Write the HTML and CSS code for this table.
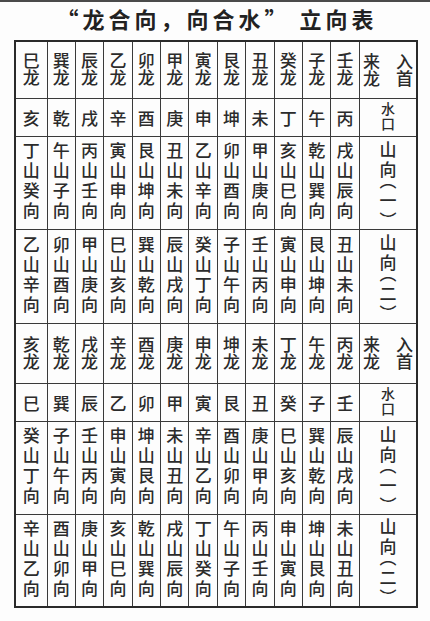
FILE: index.html
```html
<!DOCTYPE html>
<html lang="zh">
<head>
<meta charset="utf-8">
<title>龙合向，向合水 立向表</title>
<link rel="stylesheet" href="styles.css">
</head>
<body>
<div class="page">
  <h1 class="title">“龙合向，向合水” 立向表</h1>
  <table class="grid">
    <colgroup>
      <col class="c-first">
      <col class="c"><col class="c"><col class="c"><col class="c"><col class="c"><col class="c">
      <col class="c"><col class="c"><col class="c"><col class="c"><col class="c">
      <col class="c-last">
    </colgroup>
    <tr class="r-dragon">
      <td><span class="v">巳龙</span></td><td><span class="v">巽龙</span></td><td><span class="v">辰龙</span></td><td><span class="v">乙龙</span></td><td><span class="v">卯龙</span></td><td><span class="v">甲龙</span></td><td><span class="v">寅龙</span></td><td><span class="v">艮龙</span></td><td><span class="v">丑龙</span></td><td><span class="v">癸龙</span></td><td><span class="v">子龙</span></td><td><span class="v">壬龙</span></td>
      <td class="head"><div class="pair"><span class="v">入首</span><span class="v">来龙</span></div></td>
    </tr>
    <tr class="r-water">
      <td>亥</td><td>乾</td><td>戌</td><td>辛</td><td>酉</td><td>庚</td><td>申</td><td>坤</td><td>未</td><td>丁</td><td>午</td><td>丙</td>
      <td class="head"><span class="v small">水口</span></td>
    </tr>
    <tr class="r-long">
      <td><span class="v v4">丁山癸向</span></td><td><span class="v v4">午山子向</span></td><td><span class="v v4">丙山壬向</span></td><td><span class="v v4">寅山申向</span></td><td><span class="v v4">艮山坤向</span></td><td><span class="v v4">丑山未向</span></td><td><span class="v v4">乙山辛向</span></td><td><span class="v v4">卯山酉向</span></td><td><span class="v v4">甲山庚向</span></td><td><span class="v v4">亥山巳向</span></td><td><span class="v v4">乾山巽向</span></td><td><span class="v v4">戌山辰向</span></td>
      <td class="head"><span class="v v4 paren">山向（一）</span></td>
    </tr>
    <tr class="r-long2">
      <td><span class="v v4">乙山辛向</span></td><td><span class="v v4">卯山酉向</span></td><td><span class="v v4">甲山庚向</span></td><td><span class="v v4">巳山亥向</span></td><td><span class="v v4">巽山乾向</span></td><td><span class="v v4">辰山戌向</span></td><td><span class="v v4">癸山丁向</span></td><td><span class="v v4">子山午向</span></td><td><span class="v v4">壬山丙向</span></td><td><span class="v v4">寅山申向</span></td><td><span class="v v4">艮山坤向</span></td><td><span class="v v4">丑山未向</span></td>
      <td class="head"><span class="v v4 paren">山向（二）</span></td>
    </tr>
    <tr class="r-dragon2">
      <td><span class="v">亥龙</span></td><td><span class="v">乾龙</span></td><td><span class="v">戌龙</span></td><td><span class="v">辛龙</span></td><td><span class="v">酉龙</span></td><td><span class="v">庚龙</span></td><td><span class="v">申龙</span></td><td><span class="v">坤龙</span></td><td><span class="v">未龙</span></td><td><span class="v">丁龙</span></td><td><span class="v">午龙</span></td><td><span class="v">丙龙</span></td>
      <td class="head"><div class="pair"><span class="v">入首</span><span class="v">来龙</span></div></td>
    </tr>
    <tr class="r-water">
      <td>巳</td><td>巽</td><td>辰</td><td>乙</td><td>卯</td><td>甲</td><td>寅</td><td>艮</td><td>丑</td><td>癸</td><td>子</td><td>壬</td>
      <td class="head"><span class="v small">水口</span></td>
    </tr>
    <tr class="r-long">
      <td><span class="v v4">癸山丁向</span></td><td><span class="v v4">子山午向</span></td><td><span class="v v4">壬山丙向</span></td><td><span class="v v4">申山寅向</span></td><td><span class="v v4">坤山艮向</span></td><td><span class="v v4">未山丑向</span></td><td><span class="v v4">辛山乙向</span></td><td><span class="v v4">酉山卯向</span></td><td><span class="v v4">庚山甲向</span></td><td><span class="v v4">巳山亥向</span></td><td><span class="v v4">巽山乾向</span></td><td><span class="v v4">辰山戌向</span></td>
      <td class="head"><span class="v v4 paren">山向（一）</span></td>
    </tr>
    <tr class="r-long">
      <td><span class="v v4">辛山乙向</span></td><td><span class="v v4">酉山卯向</span></td><td><span class="v v4">庚山甲向</span></td><td><span class="v v4">亥山巳向</span></td><td><span class="v v4">乾山巽向</span></td><td><span class="v v4">戌山辰向</span></td><td><span class="v v4">丁山癸向</span></td><td><span class="v v4">午山子向</span></td><td><span class="v v4">丙山壬向</span></td><td><span class="v v4">申山寅向</span></td><td><span class="v v4">坤山艮向</span></td><td><span class="v v4">未山丑向</span></td>
      <td class="head"><span class="v v4 paren">山向（二）</span></td>
    </tr>
  </table>
</div>
</body>
</html>
```
FILE: styles.css
```css
html, body {
  margin: 0;
  background: #fdfdfd;
}
body {
  font-family: "Noto Sans CJK SC", "Noto Sans", sans-serif;
  color: #2b2b2b;
}
.page {
  border-top: 2px solid #4a4a4a;
}
.title {
  margin: 0;
  height: 31px;
  padding: 0 0 7px 4px;
  display: flex;
  align-items: center;
  justify-content: center;
  font-size: 22px;
  font-weight: 700;
  letter-spacing: 4px;
  line-height: 1;
  color: #222;
}
.grid {
  border-collapse: collapse;
  table-layout: fixed;
  width: 403px;
  margin-left: 14px;
  border: 2px solid #2a2a2a;
}
.c-first { width: 32px; }
.c { width: 28.4px; }
.c-last { width: 58px; }
.grid td {
  border: 1px solid #3a3a3a;
  padding: 0;
  text-align: center;
  vertical-align: middle;
  font-size: 17px;
  font-weight: 500;
  line-height: 1;
}
.v {
  writing-mode: vertical-rl;
  display: inline-block;
}
.v4 {
  letter-spacing: 3px;
}
.paren {
  font-feature-settings: "vhal" 1;
}
.small {
  font-size: 14px;
  letter-spacing: 1px;
}
.pair {
  display: flex;
  flex-direction: row-reverse;
  justify-content: center;
  gap: 16px;
}
.r-dragon { height: 57px; }
.r-water { height: 38px; }
.r-long { height: 93px; }
.r-long2 { height: 94px; }
.r-dragon2 { height: 60px; }
```
